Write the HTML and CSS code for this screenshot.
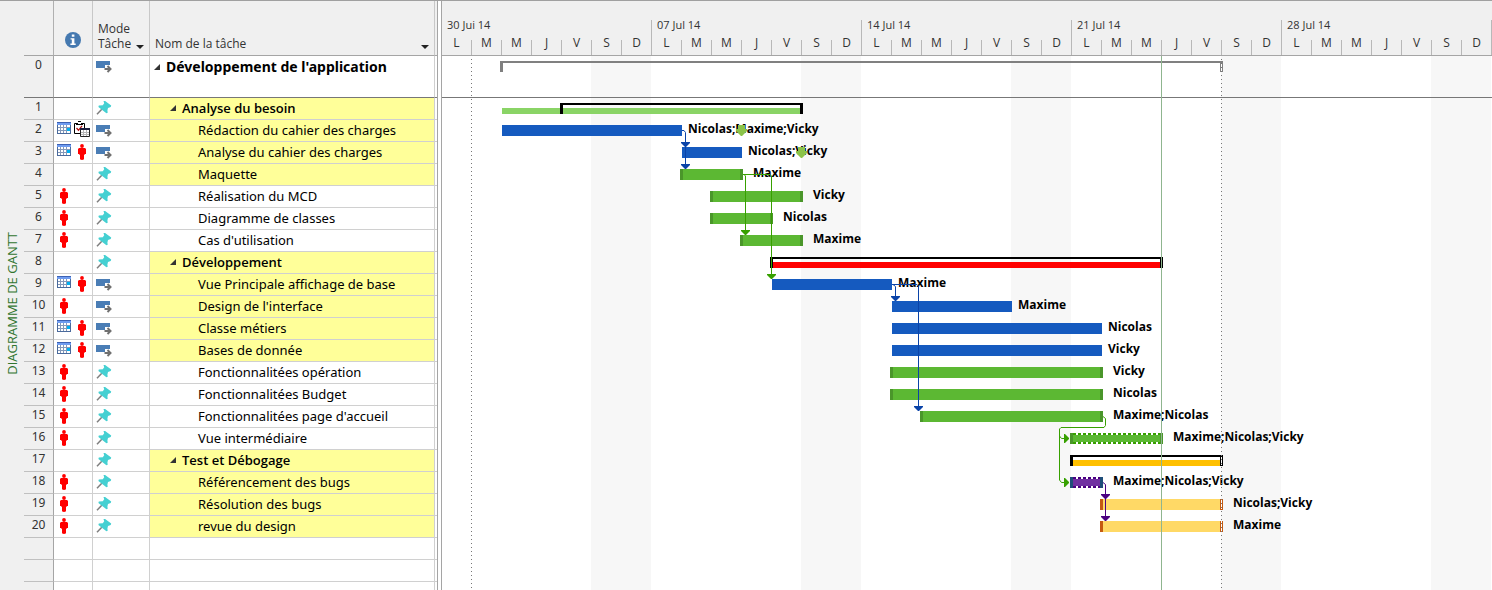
FILE: index.html
```
<!DOCTYPE html>
<html lang="fr">
<head>
<meta charset="utf-8">
<title>Diagramme de Gantt</title>
<link rel="stylesheet" href="styles.css">
</head>
<body>
<svg class="sprite" aria-hidden="true">
  <symbol id="i-info" viewBox="0 0 16 16">
    <circle cx="8" cy="8" r="8" fill="#4579b0"/>
    <path d="M6.8 2.5h2.6v2.3H6.8zM5.6 6.2h3.8v5.3h1.3v1.4H5.4v-1.4h1.4V7.6H5.6z" fill="#fff"/>
  </symbol>
  <symbol id="i-auto" viewBox="0 0 16 12">
    <path d="M0 0h14v4H9v3H0z" fill="#4a7db5"/>
    <path d="M8.500 8h5M11.500 5l3 3-3 3" fill="none" stroke="#707070" stroke-width="2"/>
  </symbol>
  <symbol id="i-pin" viewBox="0 0 16 14">
    <path d="M5.800 8.200L1 13.300" stroke="#7f7f7f" stroke-width="1.500"/>
    <path d="M7.500 0h1.600l6.100 4.500-.5 1.400-2.700 1-.6 2.500.3 2.400-1.300.5-8-6.400.4-1.500 4-.2 1.400-1.900z" fill="#45d0d2"/>
  </symbol>
  <symbol id="i-person" viewBox="0 0 8 16">
    <circle cx="4" cy="2" r="1.900" fill="#f00"/>
    <path d="M1 4h6l1 1v5H6.600v1H6v4.500H5L4.500 16h-1L3 15.500H2V11h-.6v-1H0V5z" fill="#f00"/>
  </symbol>
  <symbol id="i-calendar" viewBox="0 0 14 12" shape-rendering="crispEdges">
    <path d="M0 0h14v12H0z" fill="#4a6a9c"/>
    <path d="M0 0h14v3H0z" fill="#6f9cf0"/>
    <path d="M0 0h14v1H0z" fill="#3d62b5"/>
    <path d="M1 3h12v8H1z" fill="#fff"/>
    <path d="M1 5.500h12M1 8.500h12M3.500 3v8M6.500 3v8M9.500 3v8" stroke="#8499ba" fill="none"/>
    <path d="M10 6h3v3h-3z" fill="#00b0f0"/>
  </symbol>
  <symbol id="i-clipboard" viewBox="0 0 16 16">
    <path d="M.5 2.500h10v10H.5z" fill="#fff" stroke="#000"/>
    <path d="M2 2h2V0h3v2h2v2H2z" fill="#000"/>
    <path d="M4 1h3v2H4z" fill="#fff"/>
    <path d="M2.500 7l2 2.300L8 4.800" fill="none" stroke="#b01010" stroke-width="1.300"/>
    <path d="M6.500 7.500h9v8h-9z" fill="#fff" stroke="#222"/>
    <path d="M6 7h10v2H6z" fill="#1f2040"/>
    <path d="M7 11.500h8M7 13.500h8M9.500 9v6M12.500 9v6" stroke="#b5b5b5" fill="none"/>
  </symbol>
</svg>

<div class="app">
  <aside class="side"><span class="side-label">DIAGRAMME DE GANTT</span></aside>

  <section class="sheet">
    <table class="tasks">
      <colgroup><col class="c-num"><col class="c-info"><col class="c-mode"><col class="c-name"><col></colgroup>
      <thead>
        <tr>
          <th class="corner"></th>
          <th class="h-info"><svg class="info" role="img" aria-label="Indicateurs"><use href="#i-info"/></svg></th>
          <th><div class="head"><span>Mode Tâche</span><button class="drop" aria-label="Filtrer le mode"></button></div></th>
          <th><div class="head"><span>Nom de la tâche</span><button class="drop" aria-label="Filtrer le nom"></button></div></th>
          <th class="edge"></th>
        </tr>
      </thead>
      <tbody id="tasks"></tbody>
    </table>
  </section>

  <div class="splitter"></div>

  <section class="chart">
    <header class="timescale" id="timescale"></header>
    <div class="plot">
      <div id="rows"></div>
      <svg class="links" width="1050" height="534" aria-hidden="true">
        <g transform="translate(-442 -56)">
          <g fill="#8bc34a">
            <path d="M738 125h7v4h2v2l-5 5h-1l-5-5v-2h2z"/>
            <path d="M798 147h7v4h2v2l-5 5h-1l-5-5v-2h2z"/>
          </g>
          <g fill="none" stroke="#0a43a8">
            <path d="M682 130.500h2l1.500 2V168"/>
            <path d="M892 284.500h25l1.500 1.500V407M893 284.500l2.500 2V297"/>
          </g>
          <path fill="#0a43a8" d="M681 142h9v1l-4 4h-1l-4-4zM681 164h9v1l-4 4h-1l-4-4zM891 296h9v1l-4 4h-1l-4-4zM914 406h9v1l-4 4h-1l-4-4z"/>
          <g fill="none" stroke="#37a000">
            <path d="M743 174.500h27l1.500 1.500V275M744 174.500l1.500 1.500V231"/>
            <path d="M1103 416.500l2.500 2v7l-1.500 2h-43l-1.500 1.500V480l2 2.500h3M1059.500 436l2 2.500h3"/>
          </g>
          <path fill="#37a000" d="M767 274h9v1l-4 4h-1l-4-4zM741 230h9v1l-4 4h-1l-4-4zM1064 434h1l4 4v1l-4 4h-1zM1064 478h1l4 4v1l-4 4h-1z"/>
          <path fill="none" stroke="#4b0082" d="M1103 482.500l2.500 2V517"/>
          <path fill="#4b0082" d="M1101 494h9v1l-4 4h-1l-4-4zM1101 516h9v1l-4 4h-1l-4-4z"/>
        </g>
      </svg>
      <i class="vline start"></i>
      <i class="vline today"></i>
      <i class="vline finish"></i>
    </div>
  </section>
</div>
<script src="gantt.js"></script>
</body>
</html>
```
FILE: styles.css
```
* { box-sizing: border-box; }
body {
  margin: 0;
  background: #fff;
  color: #000;
  font: 13px/16px "Noto Sans", "Open Sans", sans-serif;
}
.sprite { position: absolute; width: 0; height: 0; }
.app {
  display: flex;
  height: 100vh;
  overflow: hidden;
  border-top: 1px solid #a0a0a0;
}

.side {
  flex: none;
  display: flex;
  align-items: center;
  justify-content: center;
  width: 24px;
  padding-top: 16px;
  background: #f0f0f0;
}
.side-label {
  writing-mode: vertical-rl;
  transform: rotate(180deg);
  font-family: "Open Sans", sans-serif;
  font-weight: 500;
  color: #31752f;
  white-space: nowrap;
}

.sheet { flex: none; width: 413px; }
.tasks {
  width: 100%;
  table-layout: fixed;
  border-collapse: separate;
  border-spacing: 0;
}
.c-num { width: 30px; }
.c-info { width: 39px; }
.c-mode { width: 57px; }
.c-name { width: 285px; }
.tasks th {
  height: 55px;
  padding: 0 5px 4px;
  vertical-align: bottom;
  text-align: left;
  font-family: "Open Sans", sans-serif;
  font-size: 12px;
  line-height: 15px;
  font-weight: 400;
  color: #333;
  background: #f0f0f0;
  border-right: 1px solid #c8c8c8;
  border-bottom: 1px solid #a5a5a5;
}
.tasks .corner { border-right-color: #b0b0b0; }
.tasks .h-info { padding: 0 0 7px; text-align: center; }
.tasks th.edge { border-right: 0; }
.head { display: flex; align-items: flex-end; justify-content: space-between; }
.head .drop {
  width: 8px;
  height: 10px;
  padding: 0;
  border: 0;
  background: #222;
  clip-path: polygon(0 40%, 100% 40%, 50% 80%);
  flex: none;
}
.info { display: block; width: 16px; height: 16px; margin: 0 auto; }

.tasks td {
  height: 22px;
  padding: 0;
  vertical-align: top;
  border-right: 1px solid #d0d0d0;
  border-bottom: 1px solid #d0d0d0;
}
.tasks td.num {
  padding-top: 1px;
  text-align: center;
  font-size: 12px;
  color: #333;
  background: #f0f0f0;
  border-right-color: #a5a5a5;
  border-bottom-color: #c0c0c0;
}
.tasks td.edge { border-right: 0; }
.tasks .project td { height: 42px; border-bottom-color: #777; }
.icons { display: flex; align-items: flex-start; gap: 4px; padding: 1px 0 0 3px; }
.slot { display: flex; justify-content: center; width: 14px; }
.person { width: 8px; height: 16px; margin-top: 1px; }
.calendar { width: 14px; height: 12px; margin-top: 1px; }
.clipboard { flex: none; width: 16px; height: 16px; }
.mode { display: block; margin: 5px 0 0 3px; }
.auto { width: 16px; height: 12px; }
.pin { width: 16px; height: 14px; margin-top: 3px; }
.name { display: flex; align-items: center; padding: 2px 0 0 48px; white-space: nowrap; }
.marked { background: #ffff99; }
.group .name { padding-left: 20px; font-family: "Open Sans", sans-serif; font-weight: 600; }
.project .name { padding: 3px 0 0 4px; font-size: 14px; font-weight: 700; }
.toggle {
  width: 6px;
  height: 6px;
  margin-right: 6px;
  padding: 0;
  border: 0;
  background: #333;
  clip-path: polygon(100% 0, 100% 100%, 0 100%);
}

.splitter {
  flex: none;
  width: 5px;
  background: #fff;
  border: 1px solid #a5a5a5;
  border-width: 0 1px;
}

.chart { flex: 1; min-width: 0; display: flex; flex-direction: column; overflow: hidden; }
.timescale {
  flex: none;
  display: flex;
  height: 55px;
  padding-top: 19px;
  background: #f0f0f0;
  border-bottom: 1px solid #a5a5a5;
  font-family: "Open Sans", sans-serif;
  color: #333;
}
.week {
  flex: none;
  display: flex;
  flex-direction: column;
  justify-content: space-between;
  width: 210px;
  border-right: 1px solid #b8b8b8;
}
.week-label { padding-left: 5px; font-size: 11px; line-height: 10px; }
.days { display: flex; }
.day {
  flex: none;
  width: 30px;
  height: 15px;
  border-right: 1px solid #b8b8b8;
  text-align: center;
  font-size: 12px;
  line-height: 6px;
}
.day:last-child { width: 29px; border-right: 0; }
.plot {
  position: relative;
  flex: 1;
  background: repeating-linear-gradient(90deg, #fff 0 149px, #f7f7f7 149px 209px, #fff 209px 210px);
}
.row { display: flex; align-items: flex-start; height: 22px; }
.row.project { height: 42px; border-bottom: 1px solid #777; }
.bar { position: relative; flex: none; height: 11px; margin-top: 5px; background: #155abf; }
.bar.manual { background: #5cb833; border: 3px solid #4a962a; border-width: 0 3px; }
.bar.amber { background: #ffd966; border: 3px solid #c55a11; border-width: 0 3px; }
.bar.purple { background: #7030a0; border: 3px solid #1f4e79; border-width: 0 3px; }
.bar.dotted::before,
.bar.dotted::after {
  content: "";
  position: absolute;
  left: 0;
  right: 0;
  top: 0;
  height: 2px;
  background: repeating-linear-gradient(90deg, #37a000 0 3px, #fff 3px 5px);
}
.bar.dotted::after { top: auto; bottom: 0; }
.bar.purple.dotted::before,
.bar.purple.dotted::after { background: repeating-linear-gradient(90deg, #4b0082 0 3px, #fff 3px 5px); }
.bar.summary { background: none; border: 3px solid #000; border-width: 2px 3px 0; }
.bar.summary::before { content: ""; position: absolute; inset: 3px 0 0; }
.bar.red::before { background: #f00; }
.bar.orange::before { background: #ffc000; }
.bar.overall { border-color: #808080; }
.bar.progress { height: 6px; margin-top: 10px; background: #8ad466; }
.bracket {
  position: absolute;
  left: 58px;
  right: -1px;
  top: -5px;
  height: 11px;
  border: 3px solid #000;
  border-width: 2px 3px 0;
}
.bar.open-end::after {
  content: "";
  position: absolute;
  right: -2px;
  top: 0;
  bottom: 1px;
  width: 1px;
  background: #fff;
}
.label {
  padding: 1px 0 0 6px;
  font-family: "Open Sans", sans-serif;
  font-size: 12px;
  line-height: 16px;
  font-weight: 700;
  white-space: nowrap;
}
.manual + .label, .amber + .label, .purple + .label { padding-left: 10px; }
.links { position: absolute; left: 0; top: 0; }
.vline { position: absolute; top: 0; bottom: 0; width: 1px; }
.start, .finish { background: repeating-linear-gradient(transparent 0 3px, #777 3px 4px); }
.start { left: 29px; }
.today { left: 719px; background: #8fb58f; }
.finish { left: 779px; }
```
FILE: gantt.js
```
// name, level, marked, indicators, auto mode, bar start, bar end, bar class, resources
const tasks = [
  ["Développement de l'application", "project", 0, "", 1, 500, 1223, "summary overall open-end", ""],
  ["Analyse du besoin", "group", 1, "", 0, 502, 802, "progress", ""],
  ["Rédaction du cahier des charges", "", 1, "calendar clipboard", 1, 502, 682, "", "Nicolas;Maxime;Vicky"],
  ["Analyse du cahier des charges", "", 1, "calendar person", 1, 682, 742, "", "Nicolas;Vicky"],
  ["Maquette", "", 1, "", 0, 680, 743, "manual", "Maxime"],
  ["Réalisation du MCD", "", 0, "person", 0, 710, 803, "manual", "Vicky"],
  ["Diagramme de classes", "", 0, "person", 0, 710, 773, "manual", "Nicolas"],
  ["Cas d'utilisation", "", 0, "person", 0, 740, 803, "manual", "Maxime"],
  ["Développement", "group", 1, "", 0, 770, 1163, "summary red open-end", ""],
  ["Vue Principale affichage de base", "", 1, "calendar person", 1, 772, 892, "", "Maxime"],
  ["Design de l'interface", "", 1, "person", 1, 892, 1012, "", "Maxime"],
  ["Classe métiers", "", 1, "calendar person", 1, 892, 1102, "", "Nicolas"],
  ["Bases de donnée", "", 1, "calendar person", 1, 892, 1102, "", "Vicky"],
  ["Fonctionnalitées opération", "", 0, "person", 0, 890, 1103, "manual", "Vicky"],
  ["Fonctionnalitées Budget", "", 0, "person", 0, 890, 1103, "manual", "Nicolas"],
  ["Fonctionnalitées page d'accueil", "", 0, "person", 0, 920, 1103, "manual", "Maxime;Nicolas"],
  ["Vue intermédiaire", "", 0, "person", 0, 1070, 1163, "manual dotted", "Maxime;Nicolas;Vicky"],
  ["Test et Débogage", "group", 1, "", 0, 1070, 1223, "summary orange open-end", ""],
  ["Référencement des bugs", "", 1, "person", 0, 1070, 1103, "purple dotted", "Maxime;Nicolas;Vicky"],
  ["Résolution des bugs", "", 1, "person", 0, 1100, 1223, "amber open-end", "Nicolas;Vicky"],
  ["revue du design", "", 1, "person", 0, 1100, 1223, "amber open-end", "Maxime"]
];
const origin = 442;
const icon = (id, cls) => `<svg class="${cls}" aria-hidden="true"><use href="#i-${id}"/></svg>`;

const taskRow = ([name, level, marked, marks, auto], i) => `
  <tr class="${level}">
    <td class="num">${i}</td>
    <td><div class="icons">${marks.split(" ").filter(Boolean).map(m => `<span class="slot">${icon(m, m)}</span>`).join("")}</div></td>
    <td>${auto ? icon("auto", "mode auto") : icon("pin", "mode pin")}</td>
    <td class="${marked ? "marked" : ""}"><div class="name">${level ? `<button class="toggle" aria-label="Réduire"></button>` : ""}<span>${name}</span></div></td>
    <td class="edge"></td>
  </tr>`;
const emptyRow = '<tr><td class="num"></td><td></td><td></td><td></td><td class="edge"></td></tr>';
document.getElementById("tasks").innerHTML = tasks.map(taskRow).join("") + emptyRow.repeat(3);

document.getElementById("rows").innerHTML = tasks.map(([, level, , , , from, to, cls, who]) => `
  <div class="row ${level}">
    <div class="bar ${cls}" style="margin-left:${from - origin}px;width:${to - from}px">${cls === "progress" ? '<div class="bracket"></div>' : ""}</div>
    ${who ? `<span class="label">${who}</span>` : ""}
  </div>`).join("");

document.getElementById("timescale").innerHTML = ["30 Jui 14", "07 Jul 14", "14 Jul 14", "21 Jul 14", "28 Jul 14"].map(w => `
  <div class="week"><div class="week-label">${w}</div>
    <div class="days">${[..."LMMJVSD"].map(d => `<span class="day">${d}</span>`).join("")}</div></div>`).join("");
```
